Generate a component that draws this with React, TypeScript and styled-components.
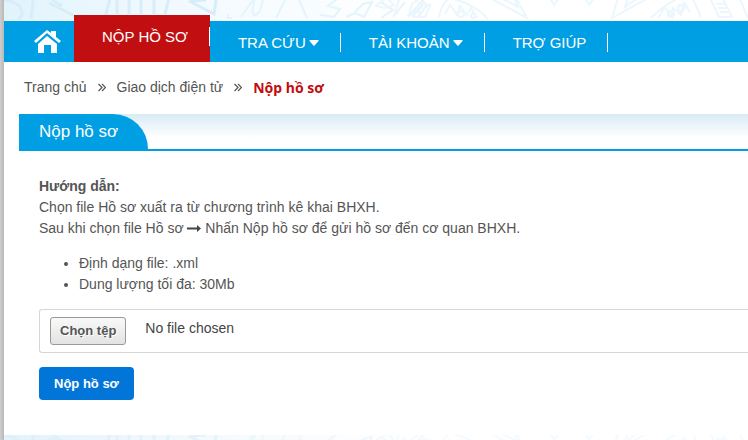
import React, { useRef, useState } from "react";
import styled, { createGlobalStyle, css } from "styled-components";

const blue = "#009fe3";
const red = "#c10e10";
const sans = `"Liberation Sans", Arial, sans-serif`;

const GlobalStyle = createGlobalStyle`
  *, *::before, *::after { box-sizing: border-box; }
  body {
    margin: 0;
    background: #fff;
    color: #555;
    font: 14px/21px ${sans};
    overflow-x: hidden;
  }
`;

const Page = styled.div`
  display: flex;
  flex-direction: column;
  min-height: 100vh;
  padding-left: 4px;
  background: linear-gradient(90deg, #cfcfcf, #b8b8b8 4px, #fff 4px);
  overflow: hidden;
`;

const PatternBand = styled.div<{ $size: "header" | "footer" }>`
  height: ${(p) => (p.$size === "header" ? "21px" : "5px")};
  overflow: hidden;
  background: linear-gradient(90deg, #e2f3fc 0%, #f3fafe 26%, #fff 55%);

  svg {
    display: block;
    height: 21px;
    width: 744px;
    opacity: ${(p) => (p.$size === "header" ? 1 : 0.5)};
  }
`;

const Nav = styled.nav`
  background: ${blue};
`;

const NavList = styled.ul`
  display: flex;
  align-items: flex-end;
  height: 41px;
  margin: 0;
  padding: 0;
  list-style: none;
`;

const NavItem = styled.li<{ $active?: boolean }>`
  display: flex;
  height: ${(p) => (p.$active ? "47px" : "41px")};
  padding-top: 12px;
  background: ${(p) => (p.$active ? red : "transparent")};
`;

const NavLink = styled.a`
  display: flex;
  gap: 3px;
  height: 19px;
  padding: 0 21px 0 28px;
  border-right: 1px solid #fff;
  color: #fff;
  font-size: 15px;
  line-height: 20px;
  text-decoration: none;
  white-space: nowrap;

  svg {
    margin-top: 7px;
  }
`;

const HomeLink = styled.a`
  display: flex;
  padding: 8px 13px 8px 30px;
  color: #fff;
`;

const Breadcrumb = styled.ol`
  display: flex;
  align-items: center;
  gap: 11px;
  margin: 0;
  padding: 15px 20px 16px;
  list-style: none;
`;

const Crumb = styled.li<{ $current?: boolean }>`
  display: flex;
  align-items: center;
  gap: 11px;
  ${(p) =>
    p.$current &&
    css`
      color: ${red};
      font-family: "Noto Sans", Tahoma, sans-serif;
      font-weight: 700;
    `}

  a {
    color: inherit;
    text-decoration: none;
  }
`;

const Panel = styled.main`
  flex: 1;
  padding-left: 15px;
`;

const PanelHeader = styled.header`
  display: flex;
  height: 37px;
  border-bottom: 2px solid ${blue};
  background: linear-gradient(#d9ebf5, #fff 24px);
`;

const PanelTitle = styled.h1`
  margin: 0;
  padding: 0 30px 0 20px;
  border-top-right-radius: 35px;
  background: ${blue};
  color: #fff;
  font-size: 17px;
  font-weight: 400;
  line-height: 35px;
`;

const PanelBody = styled.div`
  padding: 25px 0 35px 20px;
`;

const Guide = styled.p`
  margin: 0;

  svg {
    vertical-align: 0;
  }
`;

const Limits = styled.ul`
  margin: 14px 0;
  padding-left: 40px;
`;

const FileField = styled.div`
  display: flex;
  align-items: center;
  gap: 19px;
  height: 44px;
  padding: 0 10px;
  border: 1px solid #d6d6d6;
  border-right: 0;
  border-radius: 3px 0 0 3px;
  color: #444;
`;

const FileName = styled.label`
  padding-bottom: 6px;
`;

const HiddenFile = styled.input`
  display: none;
`;

const ChooseButton = styled.button`
  height: 28px;
  padding: 0 9px;
  border: 1px solid #999;
  border-radius: 3px;
  background: linear-gradient(#f9f9f9, #e3e3e3);
  color: #555;
  font: 700 13px/24px ${sans};
  text-shadow: 1px 1px #fff;
  cursor: pointer;
`;

const SubmitButton = styled.button`
  display: block;
  height: 33px;
  margin-top: 14px;
  padding: 0 15px;
  border: 0;
  border-radius: 4px;
  background: #0275d8;
  color: #fff;
  font: 700 13px/32px ${sans};
  cursor: pointer;
`;

function DrumPattern() {
  return (
    <svg viewBox="0 0 744 21" fill="none" stroke="#d7edf9" strokeWidth="3" aria-hidden="true">
      <path d="M0 0q14 2 17 9t-3 10M29 0v3l-2 16M45 3l28 14M48 0l10 6" />
      <path d="M101 18l6-24M113 14V0M125 14V0M137 14V0M150 14V0M161 14l5-20" />
      <path d="M185 1l25 13 2-14M185 1l17-1" />
      <g stroke="#e4f4fc" strokeWidth="2">
        <path d="M224 14v4h4M237 17l14-20M251 -1q-5 16 0 16t8-16M272 18l10-20M295 0l8 18M316 15l14 2 6-8-12-3 9-7M342 17l9-4 9 4 8-15-9 2-8 8M377 2l12 8-12 8" />
        <path d="M389 17l12-15M404 17l16-18M408 17l13-15M414 17l9-12" />
      </g>
      <g stroke="#ebf7fd" strokeWidth="2">
        <path d="M371 6l12-8 7 7-9 3-9-2M390 17l5-18M404 17l4-13 8-6M408 17h13l5-12-11-2-4 9h7l2-5M435 17q2-11 9-18M449 -1q22 5 35 20M441 14l5-9 7 10 3-9 7 9 4-7 6 10" />
        <circle cx="457" cy="14" r="3" />
        <circle cx="469" cy="16" r="2" />
        <path d="M486 -2l37 20-11-20M497 -2l17 9-4-9M546 -2l4 7 5-7M581 -2l4 7 5-7M614 -2l-6 20 36-20M624 -2l-3 9 13-9" />
        <path d="M647 18q13-13 28-20M654 18l7-11 7 10 1-9 8 7 3-12 6 9" />
        <circle cx="667" cy="14" r="3" />
        <circle cx="677" cy="8" r="3" />
        <path d="M689 -1l8 18M707 0l8 17h13l-9-18M712 4h8M714 8h8M716 12h8M736 -1l8 19" />
      </g>
    </svg>
  );
}

function HomeIcon() {
  return (
    <svg width="27" height="25" viewBox="0 0 27 25" fill="currentColor" role="img" aria-label="Trang chủ">
      <path d="M0 12L13 1l4 3V2h5v6l5 4-2 2L13 4 2 14z" />
      <path d="M4 15l9-8 10 8v9h-6v-8h-7v8H4z" />
    </svg>
  );
}

function Caret() {
  return (
    <svg width="10" height="6" viewBox="0 0 10 6" fill="#fff" aria-hidden="true">
      <path d="M1 0h8q1 .2.500 1L5.600 5.500q-.6.500-1.200 0L.5 1Q0 .2 1 0z" />
    </svg>
  );
}

function DoubleAngle() {
  return (
    <svg width="8" height="9" viewBox="0 0 8 9" fill="none" stroke="#555" strokeWidth="1.2" aria-hidden="true">
      <path d="M.5 1L4 4.500.5 8M4 1l3.500 3.500L4 8" />
    </svg>
  );
}

function LongArrow() {
  return (
    <svg width="14" height="9" viewBox="0 0 14 9" fill="#444" role="img" aria-label="rồi">
      <path d="M0 3.500h10V1l4 3.500L10 8V5.500H0z" />
    </svg>
  );
}

const menu = [
  { label: "NỘP HỒ SƠ", active: true },
  { label: "TRA CỨU", dropdown: true },
  { label: "TÀI KHOẢN", dropdown: true },
  { label: "TRỢ GIÚP" },
];

export default function App() {
  const picker = useRef<HTMLInputElement>(null);
  const [fileName, setFileName] = useState("No file chosen");

  return (
    <>
      <GlobalStyle />
      <Page>
        <PatternBand $size="header">
          <DrumPattern />
        </PatternBand>
        <Nav>
          <NavList>
            <li>
              <HomeLink href="#">
                <HomeIcon />
              </HomeLink>
            </li>
            {menu.map((item) => (
              <NavItem key={item.label} $active={item.active}>
                <NavLink href="#">
                  {item.label}
                  {item.dropdown && <Caret />}
                </NavLink>
              </NavItem>
            ))}
          </NavList>
        </Nav>
        <Breadcrumb>
          <Crumb>
            <a href="#">Trang chủ</a>
            <DoubleAngle />
          </Crumb>
          <Crumb>
            <a href="#">Giao dịch điện tử</a>
            <DoubleAngle />
          </Crumb>
          <Crumb $current>Nộp hồ sơ</Crumb>
        </Breadcrumb>
        <Panel>
          <PanelHeader>
            <PanelTitle>Nộp hồ sơ</PanelTitle>
          </PanelHeader>
          <PanelBody>
            <Guide>
              <strong>Hướng dẫn:</strong>
            </Guide>
            <Guide>Chọn file Hồ sơ xuất ra từ chương trình kê khai BHXH.</Guide>
            <Guide>
              Sau khi chọn file Hồ sơ <LongArrow /> Nhấn Nộp hồ sơ để gửi hồ sơ đến cơ quan BHXH.
            </Guide>
            <Limits>
              <li>Định dạng file: .xml</li>
              <li>Dung lượng tối đa: 30Mb</li>
            </Limits>
            <FileField>
              <ChooseButton type="button" onClick={() => picker.current?.click()}>
                Chọn tệp
              </ChooseButton>
              <FileName htmlFor="dossier">{fileName}</FileName>
              <HiddenFile
                ref={picker}
                id="dossier"
                type="file"
                accept=".xml"
                onChange={(e) => setFileName(e.target.files?.[0]?.name ?? "No file chosen")}
              />
            </FileField>
            <SubmitButton type="submit">Nộp hồ sơ</SubmitButton>
          </PanelBody>
        </Panel>
        <PatternBand $size="footer">
          <DrumPattern />
        </PatternBand>
      </Page>
    </>
  );
}
